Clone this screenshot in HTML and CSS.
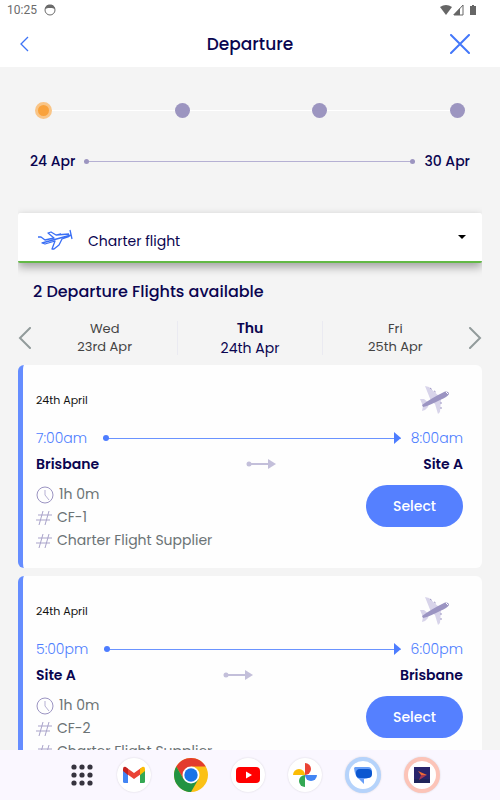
FILE: index.html
```html
<!DOCTYPE html>
<html lang="en">
<head>
    <meta charset="UTF-8">
    <meta name="viewport" content="width=device-width, initial-scale=1.0">
    <title>Departure</title>
    <link rel="stylesheet" href="styles.css">
</head>
<body>
    <!-- shared icons -->
    <svg class="sprite" aria-hidden="true">
        <symbol id="plane" viewBox="0 0 30 30">
            <path fill="#d8d4ea" d="M5 1 L9 2 L20 12 L21 15 L20 27 L18 29 L15 19 L11 16 Z M0 14 L4 14 L9 18 L8 22 L5 25 L2 26 L3 21 Z"/>
            <path fill="none" stroke="#9b94c2" stroke-width="1" stroke-dasharray="2 3" d="M10 3 L17 8 M21 17 L21 25"/>
            <path fill="#9b94c2" d="M2 20 C8 16 15 11 24 7 C27 6 29 7 29 9 C28 11 25 13 20 15 C14 18 8 21 3 22 Z"/>
            <path fill="none" stroke="#fff" stroke-width="1" d="M26 7 L28 9"/>
        </symbol>
        <symbol id="clock" viewBox="0 0 18 18">
            <circle cx="9" cy="9" r="8" fill="none" stroke="#9b94c2"/>
            <path d="M9 4 V9 L13 14" fill="none" stroke="#b5b0d3"/>
        </symbol>
        <symbol id="hash" viewBox="0 0 16 18">
            <path d="M7 2 L3 16 M13 2 L9 16 M2 6 H16 M0 11 H14" fill="none" stroke="#a9a3ca"/>
        </symbol>
        <symbol id="arrow" viewBox="0 0 30 10">
            <circle cx="3" cy="5" r="2.500" fill="#c3bfda"/>
            <path d="M5 5 H23" stroke="#c3bfda" stroke-width="2"/>
            <path d="M22 0 L30 5 L22 10 Z" fill="#c3bfda"/>
        </symbol>
    </svg>

    <header>
        <div class="status-bar">
            <span>10:25</span>
            <svg width="12" height="12" viewBox="0 0 12 12"><circle cx="6" cy="6" r="5" fill="none" stroke="#6b6b6b"/><path d="M1 5 Q2 0 6 1 Q10 0 11 5 L8 4 H4 Z" fill="#6b6b6b"/></svg>
            <svg class="signals" width="38" height="12" viewBox="0 0 38 12">
                <path d="M0 3 Q6 -1 12 3 L6 11 Z" fill="#666"/>
                <path d="M23 1 V11 H14 Z" fill="none" stroke="#666"/>
                <path d="M20 4 V11 H13 Z M30 2 H32 V1 H34 V2 H36 V11 H30 Z" fill="#666"/>
            </svg>
        </div>
        <div class="title-bar">
            <button class="icon-btn" aria-label="Back"><svg width="10" height="16" viewBox="0 0 10 16"><path d="M9 1 L2 8 L9 15" fill="none" stroke="#3d73f5" stroke-width="1.3"/></svg></button>
            <h1>Departure</h1>
            <button class="icon-btn" aria-label="Close"><svg width="20" height="20" viewBox="0 0 20 20"><path d="M1 1 L19 19 M19 1 L1 19" fill="none" stroke="#4377fa" stroke-width="2" stroke-linecap="round"/></svg></button>
        </div>
    </header>

    <main>
        <div class="steps">
            <span class="step active"></span>
            <span class="step"></span>
            <span class="step"></span>
            <span class="step"></span>
        </div>

        <div class="range">
            <span>24 Apr</span>
            <div class="range-line"></div>
            <span>30 Apr</span>
        </div>

        <div class="picker">
            <svg width="36" height="22" viewBox="0 0 36 22"><path d="M1 8 L4 8 L8 11 L17 9 L11 4 L14 3 L19 6 L32 5 M33 1 L35 10 M34 6 L31 8 L25 10 L22 16 L17 20 L15 20 L18 12 L8 15 L5 14 Z M20 6 L24 5" fill="none" stroke="#3a6ff5" stroke-width="1.3" stroke-linejoin="round"/></svg>
            <select aria-label="Flight type">
                <option>Charter flight</option>
            </select>
            <svg width="8" height="5" viewBox="0 0 8 5"><path d="M0 0 H8 L4 4 Z" fill="#000"/></svg>
        </div>

        <h2>2 Departure Flights available</h2>

        <div class="days">
            <button class="icon-btn" aria-label="Previous day"><svg width="14" height="22" viewBox="0 0 14 22"><path d="M12 1 L2 11 L12 21" fill="none" stroke="#929b9b" stroke-width="2" stroke-linecap="round"/></svg></button>
            <button class="day">Wed<br>23rd Apr</button>
            <button class="day selected"><b>Thu</b><br>24th Apr</button>
            <button class="day">Fri<br>25th Apr</button>
            <button class="icon-btn" aria-label="Next day"><svg width="14" height="22" viewBox="0 0 14 22"><path d="M2 1 L12 11 L2 21" fill="none" stroke="#929b9b" stroke-width="2" stroke-linecap="round"/></svg></button>
        </div>

        <article class="flight">
            <div class="flight-top">
                <span>24th April</span>
                <svg width="30" height="30"><use href="#plane"/></svg>
            </div>
            <div class="times">
                <span>7:00am</span>
                <div class="time-line"></div>
                <span>8:00am</span>
            </div>
            <div class="places">
                <span>Brisbane</span>
                <svg width="30" height="10"><use href="#arrow"/></svg>
                <span>Site A</span>
            </div>
            <div class="details">
                <ul>
                    <li><svg width="18" height="18"><use href="#clock"/></svg>1h 0m</li>
                    <li><svg width="16" height="18"><use href="#hash"/></svg>CF-1</li>
                    <li><svg width="16" height="18"><use href="#hash"/></svg>Charter Flight Supplier</li>
                </ul>
                <button class="select-btn">Select</button>
            </div>
        </article>

        <article class="flight">
            <div class="flight-top">
                <span>24th April</span>
                <svg width="30" height="30"><use href="#plane"/></svg>
            </div>
            <div class="times">
                <span>5:00pm</span>
                <div class="time-line"></div>
                <span>6:00pm</span>
            </div>
            <div class="places">
                <span>Site A</span>
                <svg width="30" height="10"><use href="#arrow"/></svg>
                <span>Brisbane</span>
            </div>
            <div class="details">
                <ul>
                    <li><svg width="18" height="18"><use href="#clock"/></svg>1h 0m</li>
                    <li><svg width="16" height="18"><use href="#hash"/></svg>CF-2</li>
                    <li><svg width="16" height="18"><use href="#hash"/></svg>Charter Flight Supplier</li>
                </ul>
                <button class="select-btn">Select</button>
            </div>
        </article>
    </main>

    <nav class="taskbar">
        <button class="app all-apps" aria-label="All apps">
            <svg width="34" height="34" viewBox="0 0 34 34" fill="#36343f"><circle cx="9" cy="9" r="2.600"/><circle cx="17" cy="9" r="2.600"/><circle cx="25" cy="9" r="2.600"/><circle cx="9" cy="17" r="2.600"/><circle cx="17" cy="17" r="2.600"/><circle cx="25" cy="17" r="2.600"/><circle cx="9" cy="25" r="2.600"/><circle cx="17" cy="25" r="2.600"/><circle cx="25" cy="25" r="2.600"/></svg>
        </button>
        <button class="app round" aria-label="Gmail">
            <svg width="34" height="34" viewBox="0 0 34 34"><path d="M6 11 L11 15 V25 H7.500 Q6 25 6 23.500 Z" fill="#4285f4"/><path d="M28 11 L23 15 V25 H26.500 Q28 25 28 23.500 Z" fill="#34a853"/><path d="M10 10 L17 15 L24 10 V16 L17 21 L10 16 Z" fill="#ea4335"/><path d="M6 11 Q6 8 9 9 L11 11 V17 L6 13 Z" fill="#c5221f"/><path d="M28 11 Q28 8 25 9 L23 11 V17 L28 13 Z" fill="#fbbc04"/></svg>
        </button>
        <button class="app" aria-label="Chrome">
            <svg width="34" height="34" viewBox="0 0 34 34"><circle cx="17" cy="17" r="17" fill="#fbc116"/><path d="M17 8.500 H31.700 A17 17 0 0 0 2.300 8.500 L9.600 21.200 L17 17 Z" fill="#e33b2e"/><path d="M2.300 8.500 A17 17 0 0 0 17 34 L24.400 21.200 H17 L9.600 21.200 Z" fill="#229342"/><circle cx="17" cy="17" r="8.500" fill="#fff"/><circle cx="17" cy="17" r="6.700" fill="#1a73e8"/></svg>
        </button>
        <button class="app round" aria-label="YouTube">
            <svg width="34" height="34" viewBox="0 0 34 34"><rect x="5" y="9" width="24" height="16" rx="4" fill="#f00"/><path d="M15 13.500 L21 17 L15 20.500 Z" fill="#fff"/></svg>
        </button>
        <button class="app round" aria-label="Photos">
            <svg width="34" height="34" viewBox="0 0 34 34"><path d="M17 17 V5 A6 6 0 0 1 17 17 Z" fill="#ea4335"/><path d="M17 17 H29 A6 6 0 0 1 17 17 Z" fill="#4285f4"/><path d="M17 17 V29 A6 6 0 0 1 17 17 Z" fill="#34a853"/><path d="M17 17 H5 A6 6 0 0 1 17 17 Z" fill="#fbbc04"/></svg>
        </button>
        <button class="app round messages" aria-label="Messages">
            <svg width="28" height="28" viewBox="0 0 28 28"><path d="M6 6 H19 Q23 6 23 11 Q22 18 15 18 V23 L10 18 Q6 16 5 7 Z" fill="#669df6"/><rect x="7" y="8" width="16" height="9" rx="4" fill="#0b57d0"/></svg>
        </button>
        <button class="app round travel" aria-label="Travel">
            <svg width="28" height="28" viewBox="0 0 28 28"><rect x="6" y="6" width="16" height="16" fill="#29246b"/><path d="M6 18 H22 V22 H6 Z" fill="#20255a"/><path d="M10 10 L19 14 L13 14 Z" fill="#ef6a36"/><path d="M19 14 L11 19 L13 14 Z" fill="#a63852"/></svg>
        </button>
    </nav>
</body>
</html>
```

FILE: styles.css
```css
* {
    box-sizing: border-box;
}
body {
    font-family: Poppins, Inter, sans-serif;
    font-size: 14px;
    margin: 0;
    height: 100vh;
    display: flex;
    flex-direction: column;
    background-color: #f4f4f4;
    color: #0a0550;
}
button, select {
    font: inherit;
    color: inherit;
    border: none;
    background: none;
    padding: 0;
    cursor: pointer;
}
svg {
    display: block;
    flex-shrink: 0;
}
.sprite {
    position: absolute;
    width: 0;
    height: 0;
}
header {
    background-color: #fff;
}
.status-bar {
    display: flex;
    align-items: center;
    gap: 7px;
    height: 20px;
    padding: 0 22px 0 7px;
    font-family: Roboto, sans-serif;
    font-size: 12px;
    color: #6b6b6b;
}
.signals {
    margin-left: auto;
}
.title-bar {
    display: grid;
    grid-template-columns: 1fr auto 1fr;
    align-items: center;
    height: 47px;
    padding: 0 30px 0 19px;
}
.title-bar .icon-btn {
    justify-self: start;
}
.title-bar .icon-btn:last-child {
    justify-self: end;
}
h1 {
    font-size: 17px;
    font-weight: 500;
    margin: 0 0 0 11px;
}
main {
    flex: 1;
    overflow: auto;
    scrollbar-width: none;
    padding: 0 18px;
}
.steps {
    display: flex;
    justify-content: space-between;
    align-items: center;
    height: 17px;
    margin: 35px 17px 0;
    background: linear-gradient(#fff, #fff) center / 100% 1px no-repeat;
}
.step {
    width: 15px;
    height: 15px;
    border-radius: 50%;
    background-color: #9c95c0;
}
.step.active {
    width: 17px;
    height: 17px;
    border: 3px solid #f9c587;
    background-color: #f9a23c;
}
.range {
    display: flex;
    align-items: center;
    gap: 9px;
    margin: 32px 12px 0;
    line-height: 20px;
    font-weight: 500;
}
.range-line, .time-line {
    flex: 1;
    display: flex;
    justify-content: space-between;
    align-items: center;
    background: linear-gradient(#b5b0d3, #b5b0d3) center / 100% 1px no-repeat;
}
.range-line::before, .range-line::after {
    content: "";
    width: 5px;
    height: 5px;
    border-radius: 50%;
    background-color: #9c95c0;
}
.picker {
    display: flex;
    align-items: center;
    gap: 15px;
    height: 50px;
    margin-top: 42px;
    padding: 0 16px 0 19px;
    background-color: #fff;
    border-bottom: 2px solid #62b946;
    border-radius: 2px;
    box-shadow: 0 4px 10px rgba(0,0,0,0.35);
    clip-path: inset(-10px 0 -16px 0);
}
.picker svg:first-child {
    margin-top: 6px;
}
.picker select {
    flex: 1;
    height: 100%;
    appearance: none;
    padding-top: 8px;
}
h2 {
    margin: 18px 16px 0 15px;
    font-size: 16px;
    line-height: 22px;
    font-weight: 500;
}
.days {
    display: flex;
    justify-content: space-between;
    align-items: center;
    margin: 15px 0 7px;
}
.day {
    flex: 1;
    font-size: 13px;
    line-height: 18px;
    color: #444;
}
.day.selected {
    font-size: 14px;
    line-height: 20px;
    color: #0a0550;
    background: linear-gradient(#eaeaf1, #eaeaf1) left / 1px 34px no-repeat, linear-gradient(#eaeaf1, #eaeaf1) right / 1px 34px no-repeat;
}
b {
    font-weight: 600;
}
.flight {
    margin-bottom: 8px;
    padding: 20px 19px 16px 13px;
    background-color: #fefefe;
    border-left: 5px solid #658dff;
    border-radius: 6px;
}
.flight-top {
    display: flex;
    justify-content: space-between;
    align-items: center;
    height: 30px;
    padding-right: 13px;
    font-size: 11px;
    color: #111;
}
.times {
    display: flex;
    align-items: center;
    height: 20px;
    margin-top: 13px;
    font-weight: 300;
    color: #4d7dff;
}
.time-line {
    margin: 0 10px 0 16px;
    background-image: linear-gradient(#6a93ff, #6a93ff);
}
.time-line::before {
    content: "";
    width: 6px;
    height: 6px;
    border-radius: 50%;
    background-color: #4d7dff;
}
.time-line::after {
    content: "";
    border: solid transparent;
    border-width: 6px 0 6px 7px;
    border-left-color: #4d7dff;
}
.places {
    display: flex;
    justify-content: space-between;
    align-items: center;
    margin-top: 6px;
    line-height: 20px;
    font-weight: 600;
}
.details {
    display: flex;
    justify-content: space-between;
    margin-top: 9px;
    color: #6b7375;
}
ul {
    list-style: none;
    margin: 0;
    padding: 0;
}
li {
    display: flex;
    align-items: center;
    gap: 5px;
    height: 23px;
}
.select-btn {
    width: 97px;
    height: 42px;
    margin-top: 2px;
    border-radius: 21px;
    background-color: #5580ff;
    color: #fff;
    font-weight: 500;
}
.taskbar {
    display: flex;
    justify-content: center;
    align-items: center;
    height: 50px;
    gap: 23px;
    padding-left: 5px;
    background-color: #faf7ff;
}
.app {
    width: 34px;
    height: 34px;
    display: flex;
    justify-content: center;
    align-items: center;
    border-radius: 50%;
}
.all-apps {
    margin-right: -5px;
}
.round {
    background-color: #fff;
    box-shadow: 0 0 2px rgba(0,0,0,0.15);
}
.messages, .travel {
    width: 36px;
    height: 36px;
    border: 4px solid #b5d3fb;
}
.travel {
    border-color: #fcc4b8;
}
```
